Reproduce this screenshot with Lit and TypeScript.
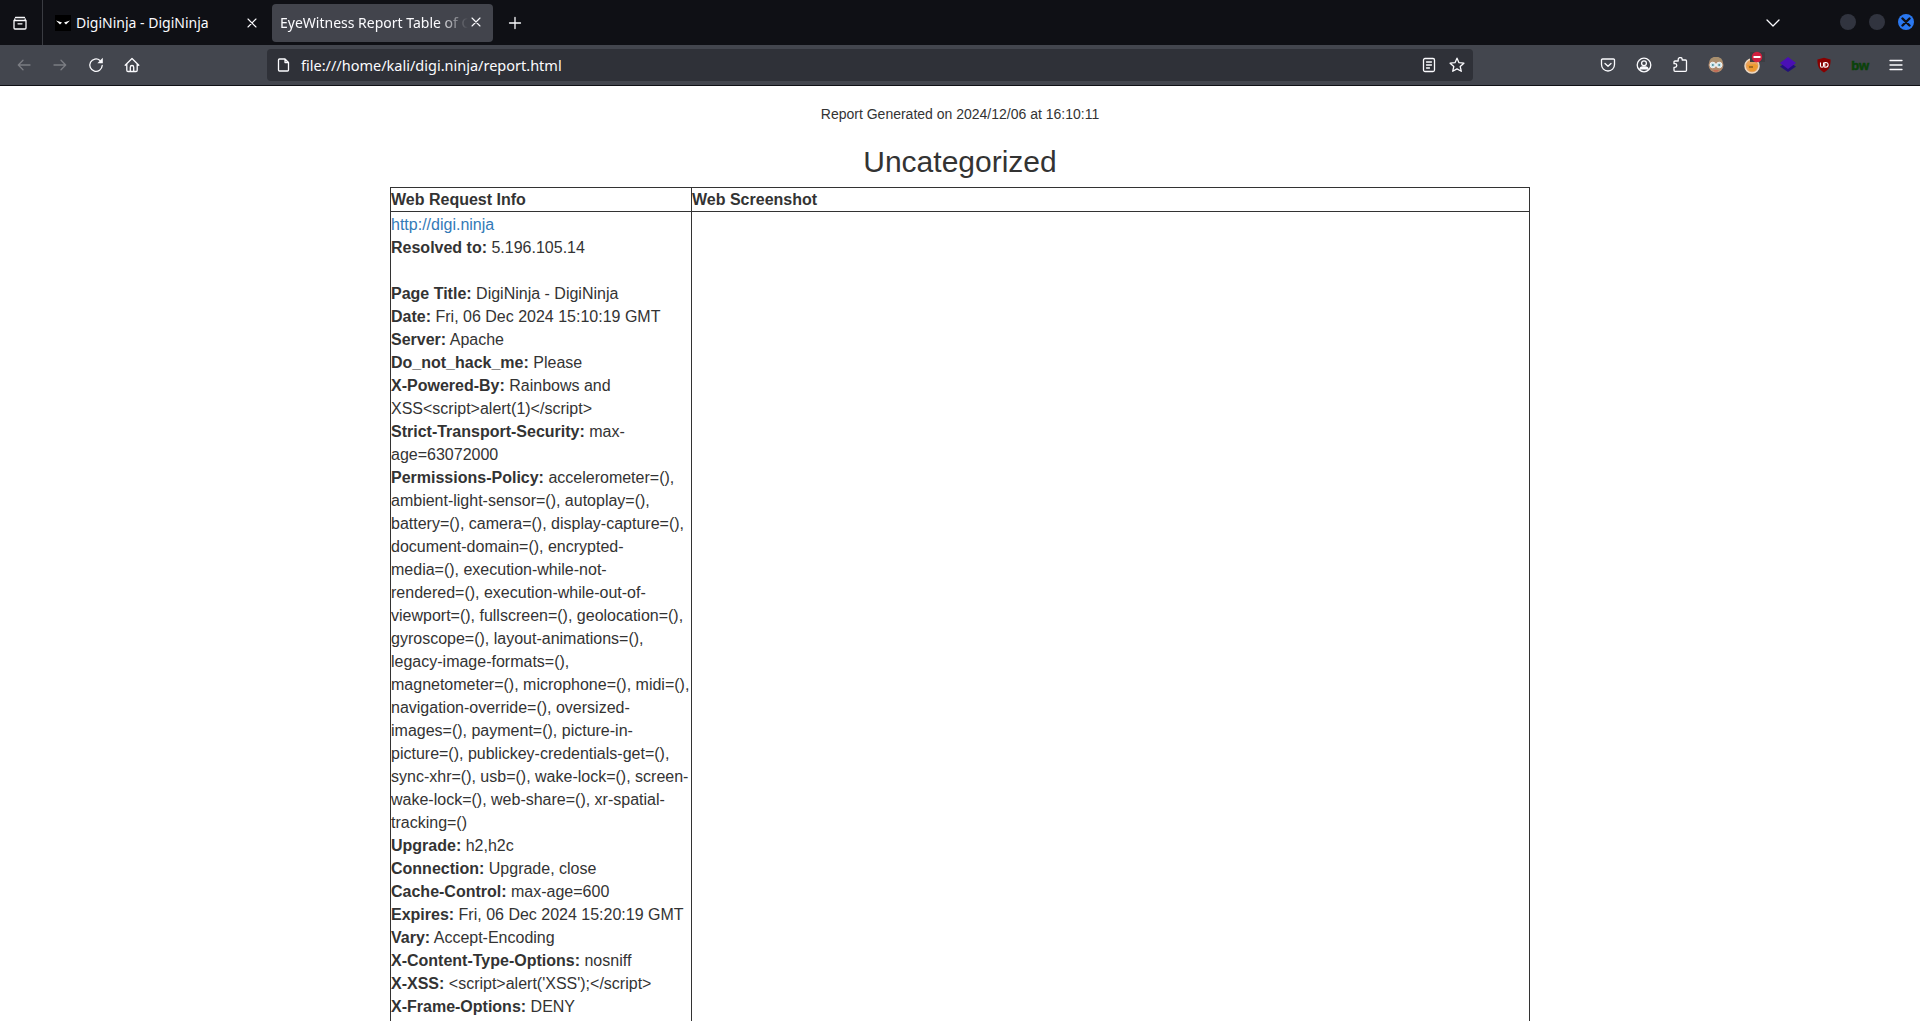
import { LitElement, html, css, svg } from "lit";
import { customElement } from "lit/decorators.js";

const rows: [string, string][] = [
  ["Page Title:", "DigiNinja - DigiNinja"],
  ["Date:", "Fri, 06 Dec 2024 15:10:19 GMT"],
  ["Server:", "Apache"],
  ["Do_not_hack_me:", "Please"],
  ["X-Powered-By:", "Rainbows and XSS<script>alert(1)</script>"],
  ["Strict-Transport-Security:", "max-age=63072000"],
  ["Permissions-Policy:", "accelerometer=(), ambient-light-sensor=(), autoplay=(), battery=(), camera=(), display-capture=(), document-domain=(), encrypted-media=(), execution-while-not-rendered=(), execution-while-out-of-viewport=(), fullscreen=(), geolocation=(), gyroscope=(), layout-animations=(), legacy-image-formats=(), magnetometer=(), microphone=(), midi=(), navigation-override=(), oversized-images=(), payment=(), picture-in-picture=(), publickey-credentials-get=(), sync-xhr=(), usb=(), wake-lock=(), screen-wake-lock=(), web-share=(), xr-spatial-tracking=()".replace(/=\(\)/g, "=\u2060(\u2060)")],
  ["Upgrade:", "h2,h2c"],
  ["Connection:", "Upgrade, close"],
  ["Cache-Control:", "max-age=600"],
  ["Expires:", "Fri, 06 Dec 2024 15:20:19 GMT"],
  ["Vary:", "Accept-Encoding"],
  ["X-Content-Type-Options:", "nosniff"],
  ["X-XSS:", "<script>alert('XSS');</script>"],
  ["X-Frame-Options:", "DENY"],
];

const ic = (body: unknown, stroke = "#fbfbfe") => html`<svg width="16" height="16" viewBox="0 0 16 16" fill="none" stroke=${stroke} stroke-width="1.3" stroke-linecap="round" stroke-linejoin="round">${body}</svg>`;

@customElement("app-root")
export class AppRoot extends LitElement {
  static styles = css`
    :host { display: flex; flex-direction: column; width: 1920px; height: 1021px; overflow: hidden; background: #fff; font-family: "Liberation Sans", Arial, sans-serif; color: #333; }
    .tabbar { flex: none; height: 45px; background: #0f1015; display: flex; align-items: flex-start; color: #fbfbfe; font-family: "Noto Sans", "Open Sans", sans-serif; font-size: 14px; position: relative; }
    .fxview { width: 43px; height: 45px; display: flex; align-items: center; justify-content: center; border-right: 1px solid #3a3c42; box-sizing: border-box; flex: none; padding-right: 3px; }
    .tab { height: 39px; margin-top: 4px; border-radius: 4px; display: flex; align-items: center; box-sizing: border-box; flex: none; position: relative; white-space: nowrap; overflow: hidden; padding-bottom: 2px; }
    .tab1 { width: 225px; margin-left: 4px; padding-left: 8px; }
    .tab2 { width: 221px; background: #42444c; padding-left: 8px; padding-bottom: 0; height: 38px; }
    .fav { width: 16px; height: 16px; background: #000; margin-right: 5px; flex: none; display: block; }
    .title { flex: 1; overflow: hidden; }
    .tab2 .title { margin-top: -2px; mask-image: linear-gradient(to right, #000 84%, transparent 100%); -webkit-mask-image: linear-gradient(to right, #000 84%, transparent 100%); }
    .close { width: 24px; height: 24px; flex: none; display: flex; align-items: center; justify-content: center; margin-right: 4px; }
    .tab1 .close { margin-right: 8px; }
    .tab2 .close { margin-top: -2px; margin-right: 5px; margin-left: -4px; }
    .plus { width: 28px; height: 37px; margin: 4px 0 0 8px; display: flex; align-items: center; justify-content: center; flex: none; }
    .chev { margin-left: auto; margin-right: 139px; height: 45px; display: flex; align-items: center; }
    .wbtns { position: absolute; right: 6px; top: 14px; display: flex; gap: 13px; }
    .wb { width: 16px; height: 16px; border-radius: 50%; background: #31343f; display: flex; align-items: center; justify-content: center; }
    .wb.x { background: #2a78f0; }
    .toolbar { flex: none; height: 41px; box-sizing: border-box; background: #43464e; border-bottom: 1px solid #0f1015; display: flex; align-items: center; padding: 0 6px; color: #fbfbfe; }
    .btn { width: 36px; height: 36px; display: flex; align-items: center; justify-content: center; flex: none; }
    .btn.home { margin-right: 118px; width: 35px; }
    .url { width: 1206px; height: 32px; background: #2f3138; border-radius: 4px; display: flex; align-items: center; padding: 0 8px 0 9px; box-sizing: border-box; flex: none; font-family: "Noto Sans", "Open Sans", sans-serif; font-size: 14.5px; color: #fbfbfe; }
    .url .t { margin-left: 9px; flex: 1; }
    .url svg.r { margin-left: 12px; }
    .right { margin-left: auto; display: flex; }
    .bw { font: 700 13px/1 "Liberation Sans", Arial, sans-serif; color: #0a420a; letter-spacing: -0.4px; -webkit-text-stroke: 0.5px #0a420a; }
    .page { flex: 1; min-height: 0; overflow: hidden; display: flex; flex-direction: column; align-items: center; }
    .gen { font-size: 14px; line-height: 20px; margin-top: 18px; text-align: center; }
    h2 { font-size: 30px; font-weight: 400; line-height: 33px; margin: 21px 0 9px; text-align: center; color: #333; }
    table { width: 1140px; border-collapse: collapse; table-layout: fixed; font-size: 16px; line-height: 23px; flex: none; }
    th, td { border: 1px solid #333; padding: 0; text-align: left; vertical-align: top; }
    th { font-weight: 700; padding-top: 1px; line-height: 22px; }
    td { padding-top: 1px; }
    td.tall { height: 1500px; }
    a { color: #337ab7; text-decoration: none; }
    b { font-weight: 700; }
  `;

  render() {
    return html`
      <div class="tabbar">
        <div class="fxview">${ic(svg`<path d="M3.500 2.500h9M2 5.500h12v7.500a1 1 0 0 1-1 1H3a1 1 0 0 1-1-1zM2.800 5.300V3.800M13.200 5.300V3.800M6 8.800h4"/>`)}</div>
        <div class="tab tab1">
          <svg class="fav" viewBox="0 0 16 16"><rect width="16" height="16" fill="#000"/><path d="M1 5.500l6 2-2 2zM15 5.500l-6 2 2 2z" fill="#fff"/></svg>
          <span class="title">DigiNinja - DigiNinja</span>
          <span class="close">${closeIcon()}</span>
        </div>
        <div class="tab tab2">
          <span class="title">EyeWitness Report Table of Contents</span>
          <span class="close">${closeIcon()}</span>
        </div>
        <div class="plus">${ic(svg`<path d="M8 2.500v11M2.500 8h11"/>`)}</div>
        <div class="chev">${ic(svg`<path d="M2 5 8 11l6-6"/>`)}</div>
        <div class="wbtns">
          <span class="wb"></span><span class="wb"></span>
          <span class="wb x"><svg width="10" height="10" viewBox="0 0 10 10" stroke="#0f1015" stroke-width="2.400" stroke-linecap="round"><path d="M1.500 1.500l7 7M8.500 1.500l-7 7"/></svg></span>
        </div>
      </div>
      <div class="toolbar">
        <span class="btn">${ic(svg`<path d="M14 8H2.500M7 3.300 2.300 8 7 12.700"/>`, "#7b7d83")}</span>
        <span class="btn">${ic(svg`<path d="M2 8h11.500M9 3.300 13.700 8 9 12.700"/>`, "#7b7d83")}</span>
        <span class="btn">${ic(svg`<path d="M14.200 8.500A6.200 6.200 0 1 1 12 3.400"/><path d="M14.800 .8v5.400H9.400z" fill="#fbfbfe" stroke="none"/>`)}</span>
        <span class="btn home">${ic(svg`<path d="M1.200 8.200 8 1.500l6.800 6.700M2.800 6.800v6.400a1.300 1.300 0 0 0 1.300 1.300h7.800a1.300 1.300 0 0 0 1.300-1.300V6.800M6.300 14.500V10.200a1.700 1.700 0 0 1 3.400 0v4.300"/>`)}</span>
        <div class="url">
          ${ic(svg`<path d="M3.500 2h5.500l3.500 3.500V13a1 1 0 0 1-1 1h-8a1 1 0 0 1-1-1V3a1 1 0 0 1 1-1zM9 2v3.500h3.500"/>`)}
          <span class="t">file:///home/kali/digi.ninja/report.html</span>
          <svg class="r" width="16" height="16" viewBox="0 0 16 16" fill="none" stroke="#fbfbfe" stroke-width="1.300" stroke-linecap="round" stroke-linejoin="round"><rect x="2.500" y="1.500" width="11" height="13" rx="1.500"/><path d="M5.500 5h5M5.500 8h5M5.500 11h3"/></svg>
          <svg class="r" width="16" height="16" viewBox="0 0 16 16" fill="none" stroke="#fbfbfe" stroke-width="1.300" stroke-linejoin="round"><path d="M8 1.200l2 4.500 4.900.5-3.700 3.300 1.100 4.800L8 11.900l-4.300 2.400 1.100-4.800L1.100 6.200 6 5.700z"/></svg>
        </div>
        <div class="right">
          <span class="btn">${ic(svg`<path d="M2.600 2h10.800A1.100 1.100 0 0 1 14.500 3.100V7.500a6.500 6.500 0 0 1-13 0V3.100A1.100 1.100 0 0 1 2.600 2zM5 6.500 8 9.300l3-2.800"/>`)}</span>
          <span class="btn">${ic(svg`<circle cx="8" cy="8" r="6.800"/><circle cx="8" cy="6.200" r="2.400"/><path d="M3.800 12.400a3 3 0 0 1 3-2.400h2.400a3 3 0 0 1 3 2.400" fill="#fbfbfe"/>`)}</span>
          <span class="btn">${ic(svg`<path d="M6.200 3.500V3a2 2 0 0 1 4 0v.5h3.300a1 1 0 0 1 1 1v9.300a1 1 0 0 1-1 1H3a1 1 0 0 1-1-1v-3h1a1.800 1.800 0 0 0 0-3.600H2V5.500a1 1 0 0 1 1-1h3.200z" transform="translate(0 -.5)"/>`)}</span>
          <span class="btn"><svg width="16" height="16" viewBox="0 0 16 16"><circle cx="8" cy="8" r="7.500" fill="#b08a6c"/><path d="M1 4.500A7.500 7.500 0 0 1 15 4.500z" fill="#a88f6e"/><circle cx="4.800" cy="8" r="2.800" fill="#cfe6e8" stroke="#f1f4f4" stroke-width="1"/><circle cx="11.200" cy="8" r="2.800" fill="#cfe6e8" stroke="#f1f4f4" stroke-width="1"/><circle cx="4.800" cy="8" r="1" fill="#4a8b96"/><circle cx="11.200" cy="8" r="1" fill="#4a8b96"/><path d="M5 13h6l-1.500 1.800h-3z" fill="#c46a55"/></svg></span>
          <span class="btn"><svg width="22" height="22" viewBox="0 0 22 22" style="overflow:visible"><circle cx="11" cy="12" r="7" fill="#e9a25a" stroke="#ecd9c4" stroke-width="1.500"/><path d="M6 11l8-1 3 2-3 5H9z" fill="#ee9a2e"/><path d="M8 13h4" stroke="#5a3a16" stroke-width="1"/><rect x="9" y="-2" width="15" height="10" fill="#3c3d42"/><circle cx="16" cy="3" r="5.200" fill="#d01f3e"/><rect x="12.500" y="2" width="7" height="2" fill="#fff"/></svg></span>
          <span class="btn"><svg width="18" height="18" viewBox="0 0 18 18"><path d="M9 5.500l8 5-8 5.500-8-5.500z" fill="#22107a"/><path d="M9 1l8 6-8 6-8-6z" fill="#4a0fb5"/></svg></span>
          <span class="btn"><svg width="16" height="16" viewBox="0 0 16 16"><path d="M8 .8l6.600 1.800c0 6-1.200 10.200-6.600 12.900C2.600 12.800 1.400 8.600 1.400 2.600z" fill="#800"/><path d="M4.500 5.500v3.200a1.500 1.500 0 0 0 3 0V5.500M8.800 5.500v4.700h1a2.300 2.300 0 0 0 0-4.700z" fill="none" stroke="#fff" stroke-width="1.100"/></svg></span>
          <span class="btn"><span class="bw">bw</span></span>
          <span class="btn">${ic(svg`<path d="M2 3.500h12M2 8h12M2 12.500h12"/>`)}</span>
        </div>
      </div>
      <div class="page">
        <div class="gen">Report Generated on 2024/12/06 at 16:10:11</div>
        <h2>Uncategorized</h2>
        <table>
          <colgroup><col style="width:301px"><col></colgroup>
          <tr><th>Web Request Info</th><th>Web Screenshot</th></tr>
          <tr>
            <td class="tall">
              <a href="#">http://digi.ninja</a><br>
              <b>Resolved to:</b> 5.196.105.14<br><br>
              ${rows.map(([k, v]) => html`<b>${k}</b> ${v}<br>`)}
            </td>
            <td></td>
          </tr>
        </table>
      </div>
    `;
  }
}

function closeIcon() {
  return html`<svg width="12" height="12" viewBox="0 0 12 12" fill="none" stroke="#fbfbfe" stroke-width="1.100" stroke-linecap="round"><path d="M2 2l8 8M10 2l-8 8"/></svg>`;
}
